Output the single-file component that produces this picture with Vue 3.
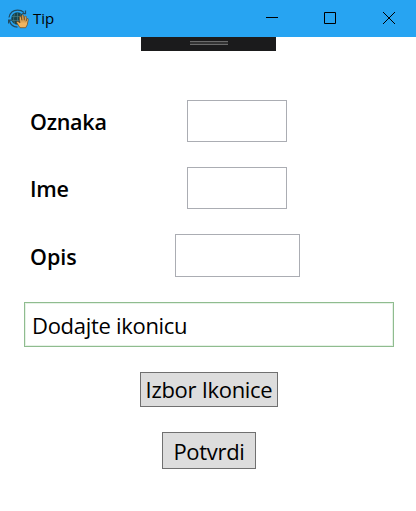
<script setup>
import { ref } from 'vue'

const fields = ref([
  { id: 'oznaka', label: 'Oznaka', value: '' },
  { id: 'ime', label: 'Ime', value: '' },
  { id: 'opis', label: 'Opis', value: '' },
])
</script>

<template>
  <div class="window">
    <header class="titlebar">
      <svg class="app-icon" width="21" height="20" viewBox="0 0 21 20">
        <circle cx="9.500" cy="9.500" r="6.200" fill="#17434d" />
        <path d="M3.500 7.500h12M3.500 11.500h12M9.500 3.500v12M6.500 4.500Q4.500 10 6.500 15M12.500 4.500q2 5 0 10" fill="none" stroke="#4c838a" stroke-width=".6" />
        <path d="M1 8.500Q2.500 1.300 9.500 1.200q4 0 6.500 2.300M17.500 1.500v3.200h-3.300M1.300 11.500Q3 17.700 9.500 18.200M.5 14.500v-3.300H4" fill="none" stroke="#204b62" stroke-width="1.200" />
        <path d="M12 18.700 8.700 13.500q-.2-1.500 1.300-1l2 1.500-.6-6q.2-1.300 1.400-.6l1.200 4-.1-5q.9-1.300 1.700 0l.6 5 .6-4q1.100-.9 1.500.3l-.2 4.500 1-2.500q1.200-.6 1.200.6l-1 5.500-1.600 2.900z" fill="#f0b45f" stroke="#744817" stroke-width=".7" />
        <path d="M14 11.500v2M16 11.500v2M17.800 12v1.500" stroke="#a77231" stroke-width=".5" />
      </svg>
      <span class="title">Tip</span>
      <div class="controls">
        <svg width="12" height="12" viewBox="0 0 12 12"><path d="M0 5.500h12" /></svg>
        <svg width="12" height="12" viewBox="0 0 12 12"><path d="M.5.5h11v11H.5z" /></svg>
        <svg class="close" width="12" height="12" viewBox="0 0 12 12"><path d="m0 0 12 12M12 0 0 12" /></svg>
      </div>
    </header>
    <div class="handle"><span class="grip"></span></div>
    <main class="form">
      <div v-for="f in fields" :key="f.id" class="row" :class="f.id">
        <label :for="f.id">{{ f.label }}</label>
        <input :id="f.id" v-model="f.value" type="text" />
      </div>
      <div class="status"><span>Dodajte ikonicu</span></div>
      <button class="pick" type="button"><span>Izbor Ikonice</span></button>
      <button class="confirm" type="button"><span>Potvrdi</span></button>
    </main>
  </div>
</template>

<style>
body { background: #fff; }
</style>

<style scoped>
.window {
  width: 416px;
  height: 511px;
  overflow: hidden;
  background: #fff;
  color: #000;
  font-family: "Open Sans", "Noto Sans", sans-serif;
}
.window * { box-sizing: border-box; }
.titlebar {
  display: flex;
  align-items: center;
  height: 37px;
  padding: 0 21px 0 8px;
  background: #27a4f2;
}
.app-icon { flex: none; }
.title {
  margin-left: 4px;
  padding-bottom: 1px;
  font-size: 15px;
  line-height: 20px;
}
.controls {
  display: flex;
  gap: 46px;
  margin-left: auto;
  margin-top: -1px;
}
.controls svg {
  display: block;
  fill: none;
  stroke: #000;
  stroke-width: 1;
}
.controls .close { margin-left: 1px; }
.handle {
  display: flex;
  justify-content: center;
  width: 135px;
  height: 14px;
  margin-left: 141px;
  padding-top: 4px;
  background: #1b1b1c;
}
.grip {
  width: 38px;
  height: 4px;
  border: solid #6b6b6b;
  border-width: 1px 0;
  background: #333;
}
.form {
  display: flex;
  flex-direction: column;
  padding: 49px 22px 0 24px;
  font-size: 22px;
  line-height: 30px;
}
.row {
  display: flex;
  align-items: center;
  height: 42px;
  margin-bottom: 25px;
}
.row label {
  width: 157px;
  padding: 2px 0 0 6px;
  font-size: 21.500px;
  font-weight: 600;
  letter-spacing: -0.250px;
}
.row input {
  width: 100px;
  height: 100%;
  margin-left: 6px;
  padding: 4px;
  border: 1px solid #abadb3;
  border-radius: 0;
  background: #fff;
  font: inherit;
  outline: none;
}
.opis { height: 43px; }
.opis label { letter-spacing: 0; }
.opis input { width: 125px; margin-left: -6px; }
.status {
  display: flex;
  align-items: center;
  height: 45px;
  padding-left: 7px;
  border: 1px solid #8fbc8f;
  box-shadow: inset 0 0 0 1px #e6f2e6;
  letter-spacing: -0.300px;
}
button {
  display: flex;
  align-items: center;
  justify-content: center;
  align-self: flex-start;
  padding: 0 0 2px;
  border: 1px solid #707070;
  border-radius: 0;
  background: #ddd;
  color: #000;
  font: inherit;
  letter-spacing: -0.300px;
  white-space: nowrap;
}
.pick { width: 138px; height: 35px; margin: 25px 0 0 116px; }
.confirm { width: 94px; height: 37px; margin: 25px 0 0 138px; padding-bottom: 0; }
</style>
